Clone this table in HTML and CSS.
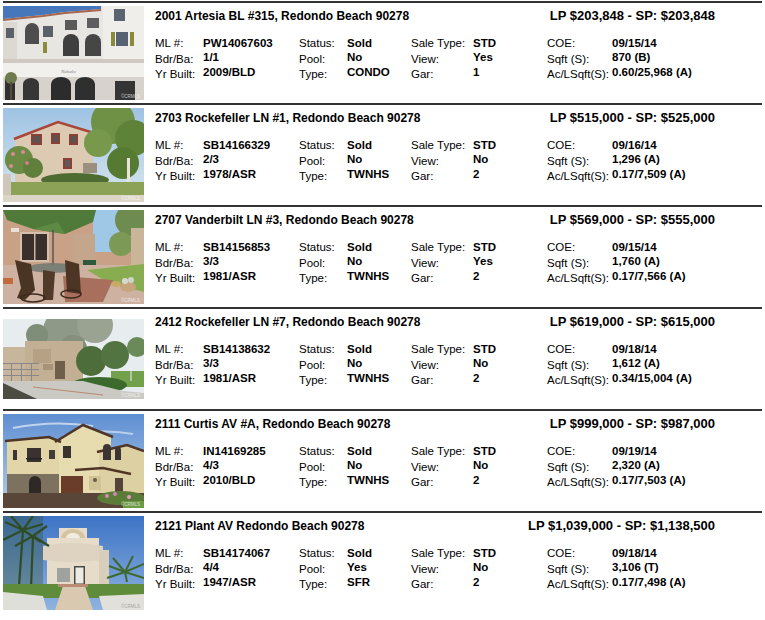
FILE: index.html
```html
<!DOCTYPE html>
<html>
<head>
<meta charset="utf-8">
<title>Sold listings - Redondo Beach</title>
<link rel="stylesheet" href="styles.css">
</head>
<body>
<div class="list">

  <div class="listing">
    <div class="photo">
      <svg viewBox="0 0 141 94" preserveAspectRatio="none">
        <rect width="141" height="94" fill="#e8e6e2"/>
        <polygon points="0,0 98,0 98,3 62,6 40,9 0,13" fill="#4677bb"/>
        <polyline points="0,14 40,10 62,7 98,4" fill="none" stroke="#a9654c" stroke-width="2"/>
        <rect x="100" y="0" width="41" height="56" fill="#efeeeb"/>
        <rect x="111" y="3" width="11" height="12" fill="#5a6470"/>
        <rect x="0" y="16" width="14" height="38" fill="#dcd8d2"/>
        <rect x="3" y="22" width="8" height="10" fill="#5c6068"/>
        <path d="M22 38 V24 a7 7 0 0 1 14 0 V38 Z" fill="#4d4d4d"/>
        <rect x="40" y="20" width="10" height="11" fill="#5b6068"/>
        <rect x="40" y="36" width="4" height="11" fill="#8c8b3c"/>
        <path d="M60 50 V36 a8 8 0 0 1 16 0 V50 Z" fill="#3f3f3f"/>
        <path d="M82 50 V36 a8 8 0 0 1 16 0 V50 Z" fill="#464646"/>
        <rect x="62" y="14" width="12" height="10" fill="#5a5a5a"/>
        <rect x="84" y="12" width="12" height="10" fill="#5e5e5e"/>
        <rect x="108" y="26" width="4" height="14" fill="#8a8a38"/>
        <rect x="113" y="26" width="12" height="14" fill="#576372"/>
        <rect x="127" y="26" width="4" height="14" fill="#8a8a38"/>
        <rect x="0" y="53" width="141" height="4" fill="#cfc9c1"/>
        <rect x="0" y="57" width="141" height="14" fill="#f2f0ed"/>
        <text x="58" y="67" font-size="5" fill="#777" font-family="Liberation Serif, serif" font-style="italic">Nuhalo</text>
        <rect x="0" y="71" width="141" height="23" fill="#d7d2cb"/>
        <rect x="2" y="73" width="10" height="21" fill="#2f3032"/>
        <path d="M20 94 V78 a8 6 0 0 1 16 0 V94 Z" fill="#363636"/>
        <path d="M48 94 V78 a10 7 0 0 1 20 0 V94 Z" fill="#2c2c2c"/>
        <path d="M72 94 V78 a10 7 0 0 1 20 0 V94 Z" fill="#2f2f2f"/>
        <rect x="112" y="75" width="20" height="19" fill="#343434"/>
        <circle cx="8" cy="72" r="6" fill="#6e7b4e"/>
        <rect x="7" y="76" width="2" height="18" fill="#5b4a3a"/>
        <text x="118" y="92" font-size="4.5" fill="#ffffff" opacity="0.7" font-family="Liberation Sans, sans-serif">©CRMLS</text>
      </svg>
    </div>
    <div class="info">
      <div class="head"><span class="addr">2001 Artesia BL #315, Redondo Beach 90278</span><span class="price">LP $203,848 - SP: $203,848</span></div>
      <div class="facts">
        <span class="lbl">ML #:</span><span class="val">PW14067603</span>
        <span class="lbl">Status:</span><span class="val">Sold</span>
        <span class="lbl">Sale Type:</span><span class="val">STD</span>
        <span class="lbl">COE:</span><span class="val">09/15/14</span>
        <span class="lbl">Bdr/Ba:</span><span class="val">1/1</span>
        <span class="lbl">Pool:</span><span class="val">No</span>
        <span class="lbl">View:</span><span class="val">Yes</span>
        <span class="lbl">Sqft (S):</span><span class="val">870 (B)</span>
        <span class="lbl">Yr Built:</span><span class="val">2009/BLD</span>
        <span class="lbl">Type:</span><span class="val">CONDO</span>
        <span class="lbl">Gar:</span><span class="val">1</span>
        <span class="lbl">Ac/LSqft(S):</span><span class="val">0.60/25,968 (A)</span>
      </div>
    </div>
  </div>

  <div class="listing">
    <div class="photo">
      <svg viewBox="0 0 141 94" preserveAspectRatio="none">
        <defs><linearGradient id="s2" x1="0" y1="0" x2="0" y2="1"><stop offset="0" stop-color="#9fc3e3"/><stop offset="1" stop-color="#d8e6ee"/></linearGradient></defs>
        <rect width="141" height="94" fill="url(#s2)"/>
        <polygon points="12,30 55,14 90,24 90,78 12,78" fill="#dccab3"/>
        <polyline points="11,31 55,14 91,25" fill="none" stroke="#a9463a" stroke-width="2.5"/>
        <rect x="28" y="26" width="11" height="11" fill="#8a3f37"/><rect x="30" y="28" width="7" height="7" fill="#5a5350"/>
        <rect x="48" y="25" width="9" height="11" fill="#8a3f37"/><rect x="50" y="27" width="5" height="7" fill="#5a5350"/>
        <rect x="66" y="26" width="9" height="11" fill="#8a3f37"/><rect x="68" y="28" width="5" height="7" fill="#5a5350"/>
        <rect x="60" y="50" width="9" height="11" fill="#8a3f37"/><rect x="62" y="52" width="5" height="7" fill="#5f5a55"/>
        <rect x="80" y="55" width="14" height="10" fill="#9b8f80"/>
        <circle cx="110" cy="14" r="22" fill="#6f9146"/>
        <circle cx="130" cy="30" r="18" fill="#5f8239"/>
        <circle cx="95" cy="35" r="14" fill="#78984c"/>
        <circle cx="120" cy="55" r="16" fill="#557a32"/>
        <rect x="124" y="50" width="3" height="30" fill="#e8e4da"/>
        <circle cx="16" cy="52" r="14" fill="#6b8a44"/>
        <circle cx="30" cy="60" r="10" fill="#5f7f3a"/>
        <circle cx="10" cy="46" r="2" fill="#d58c98"/><circle cx="20" cy="44" r="2" fill="#d58c98"/><circle cx="24" cy="55" r="2" fill="#cf7f8e"/><circle cx="8" cy="58" r="2" fill="#d58c98"/>
        <ellipse cx="72" cy="72" rx="34" ry="7" fill="#4e6c31"/>
        <rect x="0" y="74" width="141" height="13" fill="#8ba257"/>
        <rect x="0" y="66" width="8" height="28" fill="#cfc7b8"/>
        <rect x="0" y="87" width="141" height="7" fill="#ddd6c8"/>
        <text x="118" y="92" font-size="4.5" fill="#ffffff" opacity="0.7" font-family="Liberation Sans, sans-serif">©CRMLS</text>
      </svg>
    </div>
    <div class="info">
      <div class="head"><span class="addr">2703 Rockefeller LN #1, Redondo Beach 90278</span><span class="price">LP $515,000 - SP: $525,000</span></div>
      <div class="facts">
        <span class="lbl">ML #:</span><span class="val">SB14166329</span>
        <span class="lbl">Status:</span><span class="val">Sold</span>
        <span class="lbl">Sale Type:</span><span class="val">STD</span>
        <span class="lbl">COE:</span><span class="val">09/16/14</span>
        <span class="lbl">Bdr/Ba:</span><span class="val">2/3</span>
        <span class="lbl">Pool:</span><span class="val">No</span>
        <span class="lbl">View:</span><span class="val">No</span>
        <span class="lbl">Sqft (S):</span><span class="val">1,296 (A)</span>
        <span class="lbl">Yr Built:</span><span class="val">1978/ASR</span>
        <span class="lbl">Type:</span><span class="val">TWNHS</span>
        <span class="lbl">Gar:</span><span class="val">2</span>
        <span class="lbl">Ac/LSqft(S):</span><span class="val">0.17/7,509 (A)</span>
      </div>
    </div>
  </div>

  <div class="listing">
    <div class="photo">
      <svg viewBox="0 0 141 94" preserveAspectRatio="none">
        <rect width="141" height="94" fill="#c9a187"/>
        <rect x="90" y="0" width="26" height="42" fill="#9fc7e6"/>
        <circle cx="128" cy="10" r="16" fill="#6e8b50"/>
        <circle cx="118" cy="34" r="12" fill="#7c9a55"/>
        <rect x="128" y="18" width="13" height="50" fill="#c9b699"/>
        <rect x="70" y="24" width="22" height="30" fill="#c3a68c"/>
        <rect x="17" y="22" width="29" height="30" fill="#d4c0ad"/>
        <rect x="19" y="24" width="25" height="26" fill="#3a2f2a"/>
        <rect x="31" y="24" width="1.5" height="26" fill="#c8b6a2"/>
        <rect x="8" y="18" width="8" height="4" fill="#e6e0d6"/>
        <polygon points="0,0 93,0 90,12 62,24 30,19 4,10" fill="#4f7a3a"/>
        <polygon points="30,19 62,24 55,12" fill="#5e8a45"/>
        <line x1="50" y1="20" x2="50" y2="62" stroke="#4a4a4a" stroke-width="1.3"/>
        <rect x="80" y="50" width="13" height="10" fill="#2e5a3b"/>
        <rect x="0" y="55" width="141" height="39" fill="#cdb2a2"/>
        <polygon points="84,60 141,54 141,82 104,72" fill="#88ad50"/>
        <polygon points="60,66 110,70 100,92 62,92" fill="#a86f5c"/>
        <ellipse cx="50" cy="58" rx="25" ry="5" fill="#6f7770" opacity="0.85"/>
        <path d="M12 50 L28 54 L32 80 L22 90 L14 88 L18 78 Z" fill="#4a3424"/>
        <path d="M40 60 L52 62 L50 90 L40 90 Z" fill="#513a28"/>
        <path d="M62 50 L76 54 L78 84 L64 82 Z" fill="#4c3525"/>
        <ellipse cx="30" cy="88" rx="12" ry="4" fill="none" stroke="#3c2a1e" stroke-width="1.5"/>
        <ellipse cx="68" cy="84" rx="10" ry="4" fill="none" stroke="#3c2a1e" stroke-width="1.5"/>
        <rect x="0" y="68" width="10" height="6" fill="#c26a3c"/>
        <ellipse cx="125" cy="77" rx="8" ry="5" fill="#c7a47c"/>
        <circle cx="122" cy="71" r="3" fill="#d9dad6"/><circle cx="128" cy="70" r="3" fill="#cfd3cc"/>
        <ellipse cx="113" cy="74" rx="5" ry="3" fill="#c9a86a"/>
        <text x="118" y="92" font-size="4.5" fill="#ffffff" opacity="0.7" font-family="Liberation Sans, sans-serif">©CRMLS</text>
      </svg>
    </div>
    <div class="info">
      <div class="head"><span class="addr">2707 Vanderbilt LN #3, Redondo Beach 90278</span><span class="price">LP $569,000 - SP: $555,000</span></div>
      <div class="facts">
        <span class="lbl">ML #:</span><span class="val">SB14156853</span>
        <span class="lbl">Status:</span><span class="val">Sold</span>
        <span class="lbl">Sale Type:</span><span class="val">STD</span>
        <span class="lbl">COE:</span><span class="val">09/15/14</span>
        <span class="lbl">Bdr/Ba:</span><span class="val">3/3</span>
        <span class="lbl">Pool:</span><span class="val">No</span>
        <span class="lbl">View:</span><span class="val">Yes</span>
        <span class="lbl">Sqft (S):</span><span class="val">1,760 (A)</span>
        <span class="lbl">Yr Built:</span><span class="val">1981/ASR</span>
        <span class="lbl">Type:</span><span class="val">TWNHS</span>
        <span class="lbl">Gar:</span><span class="val">2</span>
        <span class="lbl">Ac/LSqft(S):</span><span class="val">0.17/7,566 (A)</span>
      </div>
    </div>
  </div>

  <div class="listing">
    <div class="photo">
      <svg class="short" viewBox="0 0 141 80" preserveAspectRatio="none">
        <rect width="141" height="80" fill="#e7ecee"/>
        <circle cx="62" cy="12" r="22" fill="#8f9988"/>
        <circle cx="92" cy="6" r="18" fill="#9aa391"/>
        <circle cx="34" cy="16" r="11" fill="#7f8e78"/>
        <circle cx="70" cy="30" r="14" fill="#858f7b"/>
        <rect x="0" y="28" width="22" height="34" fill="#c8b69c"/>
        <rect x="22" y="22" width="58" height="40" fill="#c3af93"/>
        <rect x="30" y="30" width="18" height="14" fill="#b7a184"/>
        <rect x="52" y="42" width="10" height="18" fill="#6f5e49"/>
        <rect x="40" y="45" width="10" height="6" fill="#a79378"/>
        <circle cx="88" cy="42" r="15" fill="#4d6d3b"/>
        <circle cx="112" cy="36" r="14" fill="#527440"/>
        <circle cx="134" cy="28" r="10" fill="#6a8a5a"/>
        <rect x="0" y="44" width="36" height="1" fill="#888"/>
        <rect x="0" y="50" width="36" height="1" fill="#888"/>
        <rect x="0" y="56" width="36" height="1" fill="#888"/>
        <rect x="8" y="44" width="1" height="18" fill="#888"/><rect x="18" y="44" width="1" height="18" fill="#888"/><rect x="28" y="44" width="1" height="18" fill="#888"/>
        <rect x="108" y="52" width="33" height="16" fill="#73a04b"/>
        <ellipse cx="96" cy="66" rx="28" ry="8" fill="#3c6a2c"/>
        <line x1="128" y1="46" x2="128" y2="62" stroke="#eef" stroke-width="1"/>
        <polygon points="0,62 80,62 120,72 141,74 141,80 0,80" fill="#cbc9c4"/>
        <polygon points="0,64 34,80 0,80" fill="#4c4c43"/>
        <line x1="30" y1="68" x2="100" y2="76" stroke="#b57a5a" stroke-width="0.8"/>
        <text x="118" y="78" font-size="4.5" fill="#ffffff" opacity="0.7" font-family="Liberation Sans, sans-serif">©CRMLS</text>
      </svg>
    </div>
    <div class="info">
      <div class="head"><span class="addr">2412 Rockefeller LN #7, Redondo Beach 90278</span><span class="price">LP $619,000 - SP: $615,000</span></div>
      <div class="facts">
        <span class="lbl">ML #:</span><span class="val">SB14138632</span>
        <span class="lbl">Status:</span><span class="val">Sold</span>
        <span class="lbl">Sale Type:</span><span class="val">STD</span>
        <span class="lbl">COE:</span><span class="val">09/18/14</span>
        <span class="lbl">Bdr/Ba:</span><span class="val">3/3</span>
        <span class="lbl">Pool:</span><span class="val">No</span>
        <span class="lbl">View:</span><span class="val">No</span>
        <span class="lbl">Sqft (S):</span><span class="val">1,612 (A)</span>
        <span class="lbl">Yr Built:</span><span class="val">1981/ASR</span>
        <span class="lbl">Type:</span><span class="val">TWNHS</span>
        <span class="lbl">Gar:</span><span class="val">2</span>
        <span class="lbl">Ac/LSqft(S):</span><span class="val">0.34/15,004 (A)</span>
      </div>
    </div>
  </div>

  <div class="listing">
    <div class="photo">
      <svg viewBox="0 0 141 94" preserveAspectRatio="none">
        <defs><linearGradient id="s5" x1="0" y1="0" x2="0" y2="1"><stop offset="0" stop-color="#5f8fd2"/><stop offset="1" stop-color="#b3cdea"/></linearGradient></defs>
        <rect width="141" height="94" fill="url(#s5)"/>
        <path d="M10 14 Q50 6 90 12" stroke="#e6eef8" stroke-width="2" fill="none" opacity="0.7"/>
        <path d="M60 22 Q100 14 130 20" stroke="#e6eef8" stroke-width="2" fill="none" opacity="0.6"/>
        <polygon points="4,26 46,24 58,28 58,80 4,80" fill="#e2d5a8"/>
        <polygon points="56,26 80,12 108,22 108,80 56,80" fill="#e7dbb0"/>
        <polygon points="96,36 124,32 141,38 141,84 96,84" fill="#ddd0a2"/>
        <polyline points="2,27 46,23 58,28" fill="none" stroke="#4f3526" stroke-width="2.5"/>
        <polyline points="52,28 80,11 110,23" fill="none" stroke="#4f3526" stroke-width="2.5"/>
        <polyline points="94,38 124,31 141,37" fill="none" stroke="#4f3526" stroke-width="2.5"/>
        <polyline points="72,56 100,54 128,60" fill="none" stroke="#4f3526" stroke-width="2.5"/>
        <rect x="10" y="36" width="4" height="10" fill="#3a3634"/>
        <rect x="24" y="34" width="14" height="14" fill="#3a3230"/>
        <rect x="23" y="44" width="16" height="1.5" fill="#222"/>
        <rect x="46" y="36" width="6" height="9" fill="#433b36"/>
        <rect x="60" y="32" width="8" height="12" fill="#3a3431"/>
        <path d="M100 46 V34 a4 4 0 0 1 8 0 V46 Z" fill="#3d3532"/>
        <path d="M112 46 V36 a3 3 0 0 1 6 0 V46 Z" fill="#3d3532"/>
        <rect x="4" y="60" width="52" height="20" fill="#7d7260"/>
        <path d="M26 80 V68 a6 6 0 0 1 12 0 V80 Z" fill="#2f2925"/>
        <rect x="58" y="62" width="22" height="17" fill="#6a3c2a"/>
        <rect x="86" y="62" width="12" height="14" fill="#d1c393"/>
        <circle cx="92" cy="66" r="2" fill="#6b5a45"/>
        <rect x="112" y="64" width="8" height="14" fill="#554238"/>
        <rect x="0" y="79" width="141" height="15" fill="#594638"/>
        <ellipse cx="118" cy="84" rx="24" ry="7" fill="#5b7c38"/>
        <circle cx="104" cy="82" r="2" fill="#d78bb0"/><circle cx="112" cy="80" r="2" fill="#cf86b4"/><circle cx="126" cy="83" r="2" fill="#e59dbd"/>
        <rect x="120" y="87" width="21" height="7" fill="#6d9a45"/>
        <text x="118" y="92" font-size="4.5" fill="#ffffff" opacity="0.7" font-family="Liberation Sans, sans-serif">©CRMLS</text>
      </svg>
    </div>
    <div class="info">
      <div class="head"><span class="addr">2111 Curtis AV #A, Redondo Beach 90278</span><span class="price">LP $999,000 - SP: $987,000</span></div>
      <div class="facts">
        <span class="lbl">ML #:</span><span class="val">IN14169285</span>
        <span class="lbl">Status:</span><span class="val">Sold</span>
        <span class="lbl">Sale Type:</span><span class="val">STD</span>
        <span class="lbl">COE:</span><span class="val">09/19/14</span>
        <span class="lbl">Bdr/Ba:</span><span class="val">4/3</span>
        <span class="lbl">Pool:</span><span class="val">No</span>
        <span class="lbl">View:</span><span class="val">No</span>
        <span class="lbl">Sqft (S):</span><span class="val">2,320 (A)</span>
        <span class="lbl">Yr Built:</span><span class="val">2010/BLD</span>
        <span class="lbl">Type:</span><span class="val">TWNHS</span>
        <span class="lbl">Gar:</span><span class="val">2</span>
        <span class="lbl">Ac/LSqft(S):</span><span class="val">0.17/7,503 (A)</span>
      </div>
    </div>
  </div>

  <div class="listing">
    <div class="photo">
      <svg viewBox="0 0 141 94" preserveAspectRatio="none">
        <defs><linearGradient id="s6" x1="0" y1="0" x2="0" y2="1"><stop offset="0" stop-color="#3d74c6"/><stop offset="1" stop-color="#8fb3de"/></linearGradient></defs>
        <rect width="141" height="94" fill="url(#s6)"/>
        <polygon points="44,70 44,22 56,22 56,12 84,12 84,22 96,22 96,70" fill="#e6dcc9"/>
        <path d="M58 22 a12 9 0 0 1 24 0 Z" fill="#d6c3a0"/>
        <path d="M63 22 a7 5 0 0 1 14 0 Z" fill="#f1ece0"/>
        <path d="M40 30 Q70 24 100 30 L100 44 Q70 48 40 44 Z" fill="#ddd3c0"/>
        <rect x="96" y="34" width="10" height="36" fill="#d8ceba"/>
        <rect x="54" y="52" width="13" height="14" fill="#9ea3a0"/>
        <rect x="71" y="50" width="11" height="18" fill="#4a4a45"/>
        <rect x="72.5" y="51.5" width="8" height="16" fill="#ecebe4"/>
        <rect x="0" y="0" width="40" height="72" fill="#37502c" opacity="0.35"/>
        <g stroke="#2f4d25" stroke-width="2.2" fill="none">
          <path d="M16 70 L20 14"/><path d="M28 72 L30 20"/>
          <path d="M20 14 L2 6"/><path d="M20 14 L8 0"/><path d="M20 14 L30 0"/><path d="M20 14 L40 8"/><path d="M20 14 L0 24"/><path d="M20 14 L38 26"/>
          <path d="M30 20 L44 10"/><path d="M30 20 L46 30"/><path d="M30 20 L12 30"/>
        </g>
        <g stroke="#3d6a2c" stroke-width="2" fill="none">
          <path d="M124 66 L122 56"/><path d="M122 56 L106 50"/><path d="M122 56 L110 42"/><path d="M122 56 L130 40"/><path d="M122 56 L141 48"/><path d="M122 56 L141 62"/><path d="M122 56 L104 62"/>
        </g>
        <rect x="0" y="68" width="141" height="14" fill="#5f8c3b"/>
        <polygon points="60,70 82,70 90,94 52,94" fill="#d9c9b0"/>
        <polygon points="0,76 40,80 44,94 0,94" fill="#dfdfd9"/>
        <polygon points="96,80 141,78 141,94 100,94" fill="#e1e0da"/>
        <rect x="55" y="68" width="30" height="3" fill="#b98a74"/>
        <text x="118" y="92" font-size="4.5" fill="#999" opacity="0.8" font-family="Liberation Sans, sans-serif">©CRMLS</text>
      </svg>
    </div>
    <div class="info">
      <div class="head"><span class="addr">2121 Plant AV Redondo Beach 90278</span><span class="price">LP $1,039,000 - SP: $1,138,500</span></div>
      <div class="facts">
        <span class="lbl">ML #:</span><span class="val">SB14174067</span>
        <span class="lbl">Status:</span><span class="val">Sold</span>
        <span class="lbl">Sale Type:</span><span class="val">STD</span>
        <span class="lbl">COE:</span><span class="val">09/18/14</span>
        <span class="lbl">Bdr/Ba:</span><span class="val">4/4</span>
        <span class="lbl">Pool:</span><span class="val">Yes</span>
        <span class="lbl">View:</span><span class="val">No</span>
        <span class="lbl">Sqft (S):</span><span class="val">3,106 (T)</span>
        <span class="lbl">Yr Built:</span><span class="val">1947/ASR</span>
        <span class="lbl">Type:</span><span class="val">SFR</span>
        <span class="lbl">Gar:</span><span class="val">2</span>
        <span class="lbl">Ac/LSqft(S):</span><span class="val">0.17/7,498 (A)</span>
      </div>
    </div>
  </div>

</div>
</body>
</html>
```

FILE: styles.css
```css
html, body {
  margin: 0;
  padding: 0;
  background: #ffffff;
}

body {
  font-family: "Liberation Sans", Arial, Helvetica, sans-serif;
  color: #000000;
}

.list {
  margin: 1px 0 0 3px;
  width: 759px;
}

.listing {
  display: flex;
  height: 100px;
  border-top: 2px solid #333333;
}

.photo {
  flex: none;
  width: 141px;
  height: 100px;
  display: flex;
  align-items: center;
}

.photo svg {
  display: block;
  width: 141px;
  height: 94px;
}

.photo svg.short {
  height: 80px;
}

.info {
  width: 560px;
  margin-left: 11px;
  padding-top: 6px;
}

.head {
  display: flex;
  justify-content: space-between;
  align-items: baseline;
  height: 14px;
  line-height: 14px;
  font-weight: bold;
}

.addr {
  font-size: 12px;
}

.price {
  font-size: 13px;
}

.facts {
  display: grid;
  grid-template-columns: 48px 96px 48px 64px 62px 74px 65px auto;
  margin-top: 13px;
  font-size: 11.5px;
  line-height: 15.5px;
  white-space: nowrap;
}

.val {
  font-weight: bold;
}

.facts .val:nth-child(n+9) {
  margin-top: -2px;
}
```
